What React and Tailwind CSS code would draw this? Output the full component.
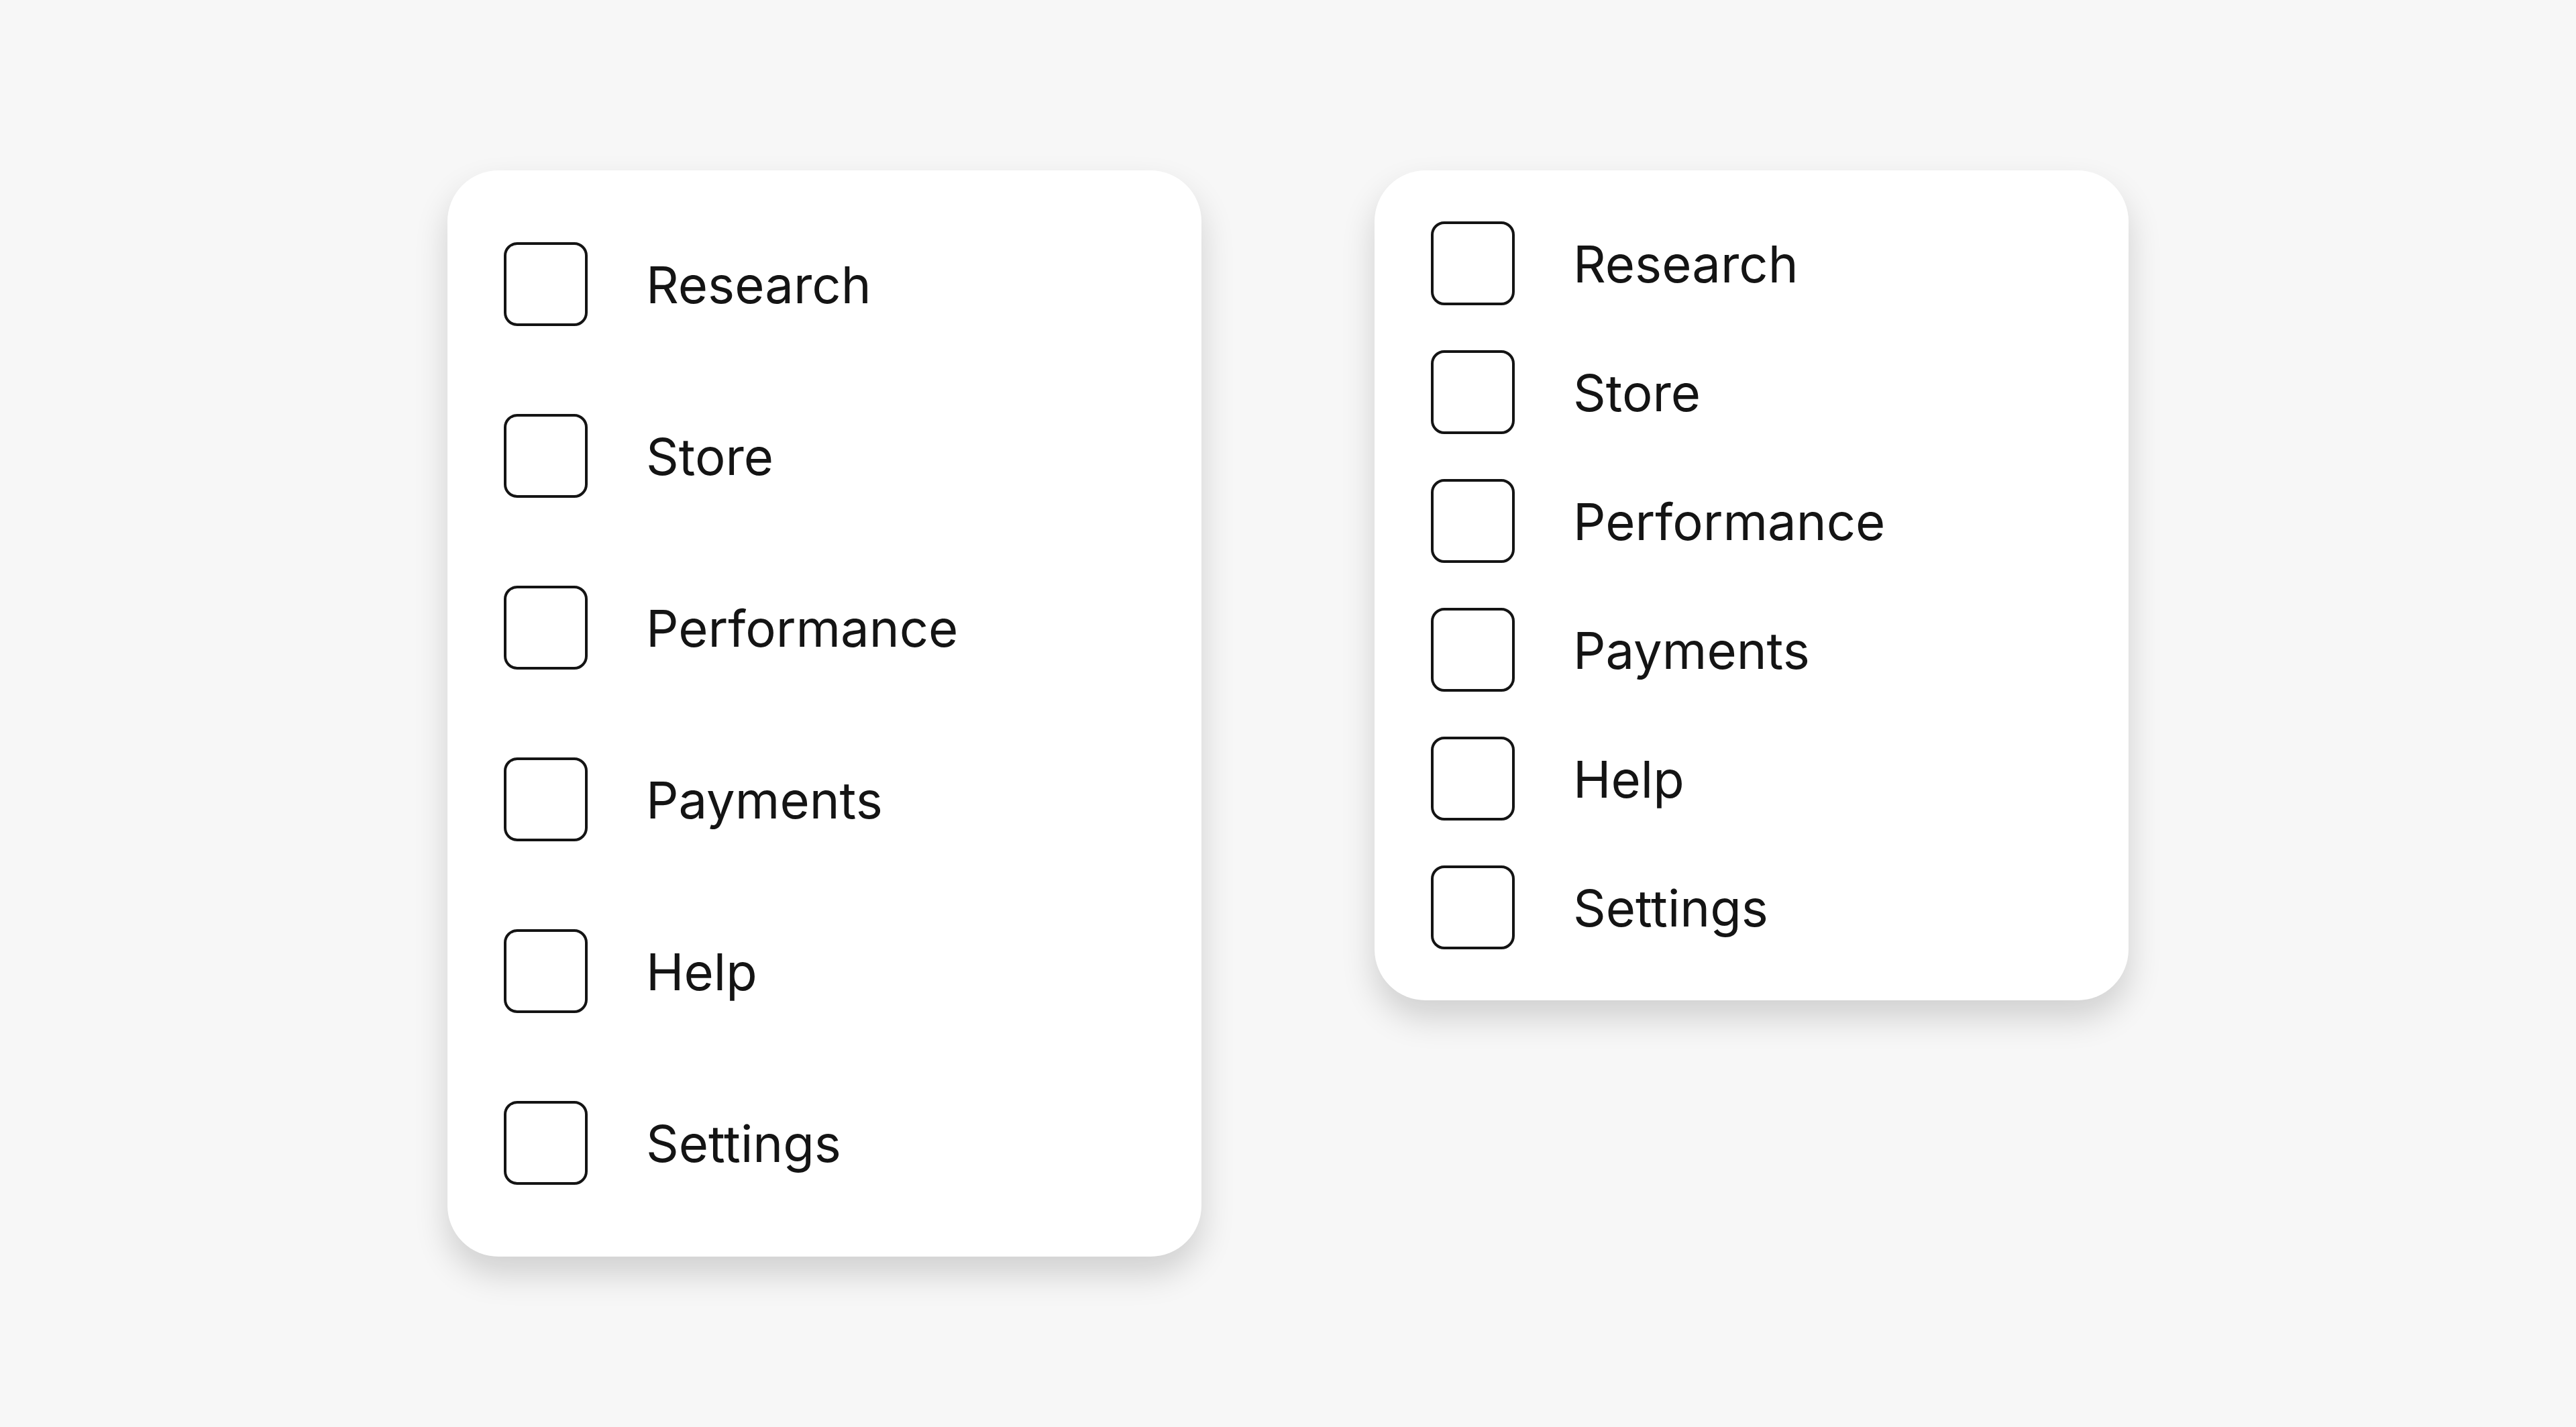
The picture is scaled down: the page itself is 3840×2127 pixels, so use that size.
import React from 'react';

const items = ['Research', 'Store', 'Performance', 'Payments', 'Help', 'Settings'];

const Checkbox = () => (
    <span className="block w-[125px] h-[125px] shrink-0 rounded-[20px] border-[4px] border-[#141414] bg-white" />
);

const CheckList = ({ gap, pad }) => (
    <div className={`w-[1124px] bg-white rounded-[76px] shadow-[0_26px_50px_rgba(0,0,0,0.16)] px-[84px] ${pad}`}>
        <ul className={`flex flex-col ${gap}`}>
            {items.map((item) => (
                <li key={item} className="flex items-center gap-[87px]">
                    <Checkbox />
                    <span className="text-[76px] leading-none text-[#141414]">{item}</span>
                </li>
            ))}
        </ul>
    </div>
);

export default function App() {
    return (
        <div className="min-h-screen bg-[#f7f7f7] flex items-center justify-center" style={{ fontFamily: 'Inter, "Noto Sans", sans-serif' }}>
            <div className="flex items-start gap-[258px]">
                <CheckList gap="gap-[131px]" pad="py-[107px]" />
                <CheckList gap="gap-[67px]" pad="py-[76px]" />
            </div>
        </div>
    );
}
